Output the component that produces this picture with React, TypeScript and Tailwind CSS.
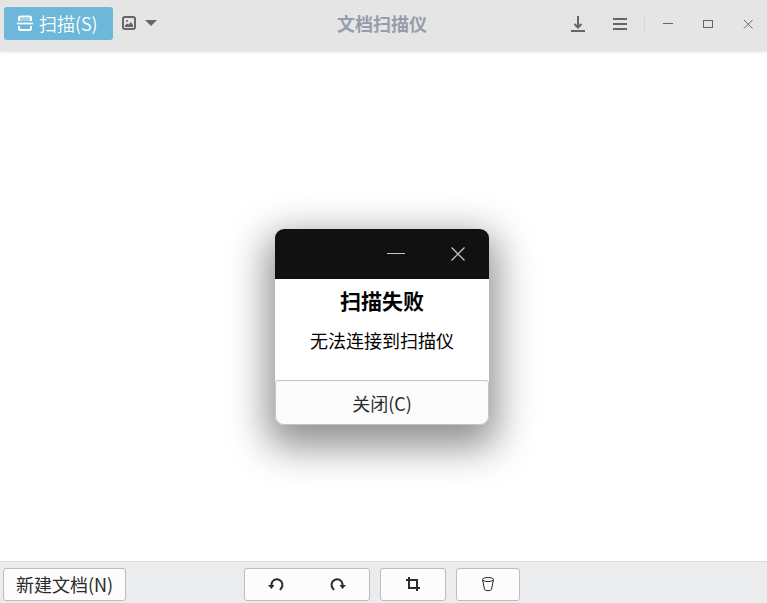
import type { ReactNode } from 'react';

interface IconProps {
	className?: string;
	children: ReactNode;
}

function Icon({ className = '', children }: IconProps) {
	return (
		<svg
			viewBox="0 0 16 17"
			fill="none"
			stroke="currentColor"
			aria-hidden="true"
			className={`w-4 h-[17px] shrink-0 ${className}`}>
			{children}
		</svg>
	);
}

const windowButton =
	'flex w-10 h-[33px] items-center justify-center text-[#666]';
const headerButton =
	'flex w-[42px] h-[33px] items-center justify-center text-[#666]';
const toolBox =
	'flex h-[33px] rounded-[3px] border border-[#b9bcc0] bg-[#fcfcfc] text-[#2b2b2b]';

function HeaderBar() {
	return (
		<header className="relative grid h-[51px] grid-cols-[1fr_auto_1fr] items-start bg-[#e5e5e5] pt-[7px] shadow-[0_1px_3px_rgba(0,0,0,0.12)]">
			<div className="flex items-center pl-1">
				<button className="flex h-[33px] items-center gap-[6px] rounded-[3px] bg-[#6db7da] pr-[15px] pb-px pl-[13px] text-lg leading-none font-[350] text-white">
					<Icon>
						<path d="M3 3h10v3H3z" fill="#fff" fillOpacity="0.35" stroke="none" />
						<path d="M2 6V3a1.500 1.500 0 0 1 1.500-1.500h9A1.500 1.500 0 0 1 14 3v3" strokeWidth="2" />
						<path d="M2 11v2.500A1.500 1.500 0 0 0 3.500 15h9a1.500 1.500 0 0 0 1.500-1.500V11" strokeWidth="2" />
						<path d="M0 8.500h16" strokeWidth="1.800" />
					</Icon>
					扫描(S)
				</button>
				<button
					aria-label="图像"
					aria-haspopup="menu"
					className="flex h-[33px] items-center gap-[6px] pl-2 text-[#666]">
					<Icon>
						<rect x="2" y="2" width="12" height="12" rx="2" strokeWidth="2" />
						<circle cx="6" cy="6" r="1" fill="currentColor" stroke="none" />
						<path d="M4 12v-1.5l2-2 1.5 1L10 7l2 3v2z" fill="currentColor" stroke="none" />
					</Icon>
					<Icon>
						<path d="M2 5h12l-6 6z" fill="currentColor" stroke="none" />
					</Icon>
				</button>
			</div>
			<h1 className="pr-[3px] text-lg leading-[33px] font-bold text-[#989caa]">
				文档扫描仪
			</h1>
			<div className="flex items-center justify-end">
				<button aria-label="保存" className={headerButton}>
					<Icon>
						<path d="M8 1v11M1 16h14" strokeWidth="2" />
						<path d="M4.5 9L8 12.5 11.5 9" strokeWidth="2" />
					</Icon>
				</button>
				<button aria-label="菜单" className={headerButton}>
					<Icon>
						<path d="M1 4h14M1 9h14M1 14h14" strokeWidth="2" />
					</Icon>
				</button>
				<span className="mr-[2px] ml-[3px] h-5 w-px bg-[#d9d9d9]" />
				<button aria-label="最小化" className={windowButton}>
					<Icon>
						<path d="M4 8.5h10" />
					</Icon>
				</button>
				<button aria-label="最大化" className={windowButton}>
					<Icon>
						<rect x="4.5" y="5.5" width="9" height="7" />
					</Icon>
				</button>
				<button aria-label="关闭窗口" className={windowButton}>
					<Icon>
						<path d="M5 5l8.5 8.5M13.5 5L5 13.5" />
					</Icon>
				</button>
			</div>
		</header>
	);
}

function ErrorDialog() {
	return (
		<div
			role="dialog"
			aria-labelledby="dialog-title"
			className="flex w-[214px] flex-col rounded-[9px] bg-white text-center text-black shadow-[0_14px_38px_8px_rgba(0,0,0,0.44)]">
			<div className="flex h-[50px] items-center justify-end gap-10 rounded-t-[9px] bg-[#111] pr-5 text-[#c4c4c4]">
				<button aria-label="最小化">
					<svg viewBox="0 0 22 22" className="size-[22px]" fill="none" stroke="currentColor">
						<path d="M2 10.5h18" />
					</svg>
				</button>
				<button aria-label="关闭窗口">
					<svg viewBox="0 0 22 22" className="size-[22px]" fill="none" stroke="currentColor">
						<path d="M4.5 4.5l13 13M17.5 4.5l-13 13" strokeWidth="1.3" />
					</svg>
				</button>
			</div>
			<h2 id="dialog-title" className="pt-[7px] text-[21px] leading-7 font-bold">
				扫描失败
			</h2>
			<p className="pt-3 pb-[26px] text-lg leading-7">无法连接到扫描仪</p>
			<button className="h-[45px] rounded-t-[3px] rounded-b-[9px] border border-[#c4c4c4] bg-[#fbfbfb] text-lg leading-none text-[#2b2b2b]">
				关闭(C)
			</button>
		</div>
	);
}

function Toolbar() {
	return (
		<footer className="grid grid-cols-[1fr_auto_1fr] border-t border-[#d9dbdd] bg-[#ebecee] pt-[6px] pr-[3px] pb-[2px]">
			<div className="pl-[3px]">
				<button className={`${toolBox} items-center px-3 pb-px text-lg leading-none`}>
					新建文档(N)
				</button>
			</div>
			<div className="flex gap-[10px]">
				<div className={toolBox}>
					<button aria-label="向左旋转" className="flex w-[62px] items-center justify-center">
						<Icon>
							<path d="M3.5 10V8a5.500 5.500 0 1 1 9.500 4.500L12 14" strokeWidth="2" />
							<path d="M0 9h6.500L3.500 13z" fill="currentColor" stroke="none" />
						</Icon>
					</button>
					<button aria-label="向右旋转" className="flex w-[62px] items-center justify-center">
						<Icon>
							<path d="M12.500 10V8A5.500 5.500 0 1 0 3 12.500L4 14" strokeWidth="2" />
							<path d="M16 9H9.500l3 4z" fill="currentColor" stroke="none" />
						</Icon>
					</button>
				</div>
				<button aria-label="裁剪" className={`${toolBox} w-[66px] items-center justify-center`}>
					<Icon>
						<path d="M4 1v11h11M1 4h11v11" strokeWidth="2" />
					</Icon>
				</button>
				<button aria-label="删除" className={`${toolBox} w-16 items-center justify-center`}>
					<Icon>
						<ellipse cx="8" cy="3.5" rx="5.5" ry="2" />
						<path d="M2.5 3.5l2 10c.5 1.5 6.5 1.5 7 0l2-10" />
					</Icon>
				</button>
			</div>
		</footer>
	);
}

export default function App() {
	return (
		<div
			lang="zh-CN"
			className="flex min-h-screen flex-col bg-white font-['Noto_Sans_CJK_SC',sans-serif]">
			<HeaderBar />
			<main className="flex flex-1 items-center justify-center pt-[42px] pr-[3px]">
				<ErrorDialog />
			</main>
			<Toolbar />
		</div>
	);
}
